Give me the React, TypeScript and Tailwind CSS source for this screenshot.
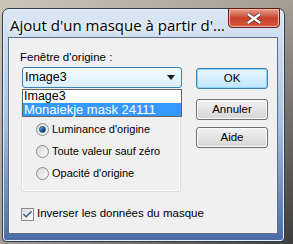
import { Check } from 'lucide-react';

const uiFont = { fontFamily: '"Liberation Sans", Arial, sans-serif' };

function Radio({ label, checked }: { label: string; checked?: boolean }) {
  return (
    <div className="flex h-[22px] items-center">
      <div className="ml-[14px] flex h-[13px] w-[13px] items-center justify-center rounded-full border border-[#8b8b8b] bg-gradient-to-br from-[#d8d8d8] to-[#fbfbfb]">
        {checked && (
          <div className="h-[7px] w-[7px] rounded-full border border-[#1d4c7c] bg-gradient-to-br from-[#8fd4f5] via-[#1f5e99] to-[#0d2f55]" />
        )}
      </div>
      <span className="ml-[3px] whitespace-nowrap text-[11px] text-black">{label}</span>
    </div>
  );
}

function Button({ label, primary }: { label: string; primary?: boolean }) {
  return (
    <div
      className={
        primary
          ? 'flex h-[21px] w-[72px] items-center justify-center rounded-[3px] border border-[#3c7fb1] bg-gradient-to-b from-[#eaf6fd] to-[#bde6fd] text-[11.5px] text-black shadow-[inset_0_0_0_1px_#8fd7f9]'
          : 'flex h-[21px] w-[72px] items-center justify-center rounded-[3px] border border-[#707070] bg-gradient-to-b from-[#f2f2f2] to-[#d6d6d6] text-[11.5px] text-black shadow-[inset_0_0_0_1px_#fcfcfc]'
      }
    >
      {label}
    </div>
  );
}

export default function App() {
  return (
    <div className="h-[244px] w-[293px] overflow-hidden bg-gradient-to-br from-[#cdc5b8] via-[#a59d92] to-[#3e3e3e] pl-[2px] pt-[8px]" style={uiFont}>
      {/* Window frame */}
      <div className="flex h-[234px] w-[283px] flex-col rounded-t-[7px] rounded-b-[4px] border border-[#2c3c55] bg-gradient-to-b from-[#dbe7f4] via-[#a9c0de] to-[#4a6ba6] shadow-[inset_0_0_0_1px_#e8f0fa]">
        {/* Title bar */}
        <div className="relative h-[28px] shrink-0">
          <span
            className="absolute left-[7px] top-[7px] text-[15px] leading-[18px] text-black"
            style={{ fontFamily: '"Open Sans", "Noto Sans", sans-serif', textShadow: '0 0 6px #fff, 0 0 4px #fff' }}
          >
            Ajout d'un masque à partir d'...
          </span>
          <div className="absolute right-[4px] top-[-1px] flex h-[20px] w-[52px] items-center justify-center rounded-b-[4px] border border-[#5b1f14] bg-gradient-to-b from-[#e8a290] via-[#c8412b] to-[#d9573c] shadow-[inset_0_0_0_1px_#f0b7a6]">
            <svg width="14" height="11" viewBox="0 0 14 11">
              <path d="M1.5 1.5 L12.5 9.5 M12.5 1.5 L1.5 9.5" stroke="#5a2a22" strokeWidth="4" strokeLinecap="round" />
              <path d="M1.5 1.5 L12.5 9.5 M12.5 1.5 L1.5 9.5" stroke="#ffffff" strokeWidth="2.4" strokeLinecap="round" />
            </svg>
          </div>
        </div>

        {/* Client area */}
        <div className="relative ml-[5px] h-[197px] w-[270px] border border-[#5d6f8c] bg-[#f0f0f0]">
          <div className="flex">
            {/* Left column */}
            <div className="w-[174px]">
              <div className="ml-[11px] mt-[12px] h-[14px] text-[11.5px] leading-[14px] text-black">Fenêtre d'origine :</div>
              <div className="ml-[13px] mt-[3px] flex h-[21px] w-[160px] items-center justify-between rounded-[3px] border border-[#3c7fb1] bg-gradient-to-b from-[#f4fafe] to-[#d9effc] pl-[2px] pr-[6px] text-[12.5px] text-black">
                <span>Image3</span>
                <svg width="8" height="5" viewBox="0 0 8 5">
                  <path d="M0 0 H8 L4 5 Z" fill="#1a1a1a" />
                </svg>
              </div>

              {/* Group box (title hidden under the dropdown list) */}
              <div className="ml-[12px] mt-[11px] h-[93px] w-[160px] rounded-[3px] border border-[#d5dfe5] pt-[18px] shadow-[inset_0_0_0_1px_#ffffff]">
                <Radio label="Luminance d'origine" checked />
                <Radio label="Toute valeur sauf zéro" />
                <Radio label="Opacité d'origine" />
              </div>

              <div className="ml-[12px] mt-[15px] flex h-[14px] items-center">
                <div className="flex h-[13px] w-[13px] shrink-0 items-center justify-center border border-[#8b8b8b] bg-gradient-to-br from-[#dcdcdc] to-[#fdfdfd]">
                  <Check size={11} strokeWidth={3.2} color="#3b5596" />
                </div>
                <span className="ml-[3px] whitespace-nowrap text-[11.5px] text-black">Inverser les données du masque</span>
              </div>
            </div>

            {/* Buttons */}
            <div className="ml-[13px] mt-[30px] flex flex-col">
              <Button label="OK" primary />
              <div className="mt-[10px]">
                <Button label="Annuler" />
              </div>
              <div className="mt-[7px]">
                <Button label="Aide" />
              </div>
            </div>
          </div>

          {/* Open dropdown list */}
          <div className="absolute left-[13px] top-[51px] w-[160px] border border-[#646464] bg-white text-[13px] leading-[13px] text-black">
            <div className="h-[13px] pl-[1px] text-[12.5px]">Image3</div>
            <div className="h-[13px] bg-[#3399ff] pl-[1px] text-white">Monaiekje mask 24111</div>
          </div>
        </div>
      </div>
    </div>
  );
}
